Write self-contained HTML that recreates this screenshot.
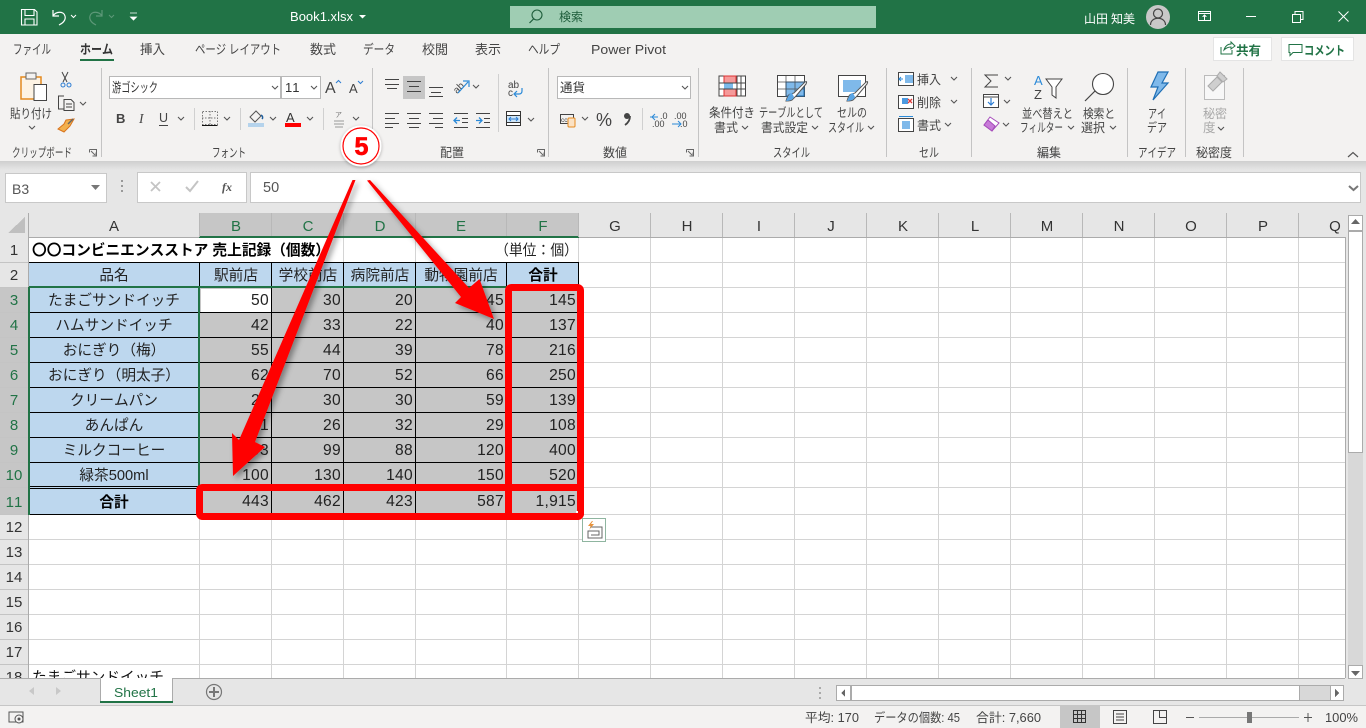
<!DOCTYPE html>
<html lang="ja"><head><meta charset="utf-8"><title>Book1.xlsx - Excel</title>
<style>
html,body{margin:0;padding:0;width:1366px;height:728px;overflow:hidden;background:#fff}
svg{display:block;position:absolute;left:0;top:0}
text{font-family:"Liberation Sans","Noto Sans CJK JP",sans-serif;white-space:pre;text-spacing-trim:space-all;font-kerning:none}
.r{font-size:12.5px;fill:#444}
.t{font-size:13px;fill:#444}
.c{font-size:14.67px;fill:#222;text-anchor:middle}
.n{font-size:15.6px;fill:#222;text-anchor:end;letter-spacing:.3px}
.h{font-size:15px;fill:#333;text-anchor:middle}
.l{stroke:#d4d4d4;stroke-width:1}
.k{stroke:#000;stroke-width:1}
.i{fill:none;stroke:#444;stroke-width:1}
.d{fill:none;stroke:#555;stroke-width:1.1}
</style></head><body>
<svg width="1366" height="728" viewBox="0 0 1366 728" xmlns="http://www.w3.org/2000/svg" shape-rendering="crispEdges">
<defs>
<filter id="sh" x="-30%" y="-30%" width="160%" height="160%"><feDropShadow dx="3" dy="3" stdDeviation="3" flood-color="#000" flood-opacity=".38"/></filter>
<filter id="gl" x="-30%" y="-30%" width="160%" height="160%"><feDropShadow dx="0" dy="1" stdDeviation="1.5" flood-color="#000" flood-opacity=".3"/></filter>
<linearGradient id="rs" x1="0" y1="0" x2="0" y2="1"><stop offset="0" stop-color="#cfcfcf"/><stop offset="1" stop-color="#e6e6e6"/></linearGradient>
</defs>

<!-- page bg -->
<rect width="1366" height="728" fill="#e6e6e6"/>

<!-- GRID -->
<rect x="29" y="238" width="1316" height="440" fill="#fff"/>
<g class="l">
<path d="M29 262.500H1345M29 287.500H1345M29 312.500H1345M29 337.500H1345M29 362.500H1345M29 387.500H1345M29 412.500H1345M29 437.500H1345M29 462.500H1345M29 487.500H1345M29 514.500H1345M29 539.500H1345M29 564.500H1345M29 589.500H1345M29 614.500H1345M29 639.500H1345M29 664.500H1345"/>
<path d="M343.500 238V678M415.500 238V678M578.500 238V678M650.500 238V678M722.500 238V678M794.500 238V678M866.500 238V678M938.500 238V678M1010.500 238V678M1082.500 238V678M1154.500 238V678M1226.500 238V678M1298.500 238V678"/>
<path d="M199.500 263V678M271.500 263V678M506.500 263V678"/>
</g>

<!-- fills -->
<rect x="29" y="263" width="170" height="251" fill="#bdd7ee"/>
<rect x="200" y="263" width="378" height="24" fill="#bdd7ee"/>
<rect x="200" y="288" width="378" height="226" fill="#c6c6c6"/>
<rect x="201" y="289" width="70" height="23" fill="#fff"/>

<!-- black borders -->
<g class="k">
<path d="M29 262.500H579M29 287.500H579M29 312.500H579M29 337.500H579M29 362.500H579M29 387.500H579M29 412.500H579M29 437.500H579M29 462.500H579M29 486.500H579M29 488.500H579M29 514.500H579"/>
<path d="M199.500 263V515M271.500 263V515M343.500 263V515M415.500 263V515M506.500 263V515M578.500 263V515"/>
</g>
<!-- selection green -->
<rect x="28" y="286" width="550" height="2" fill="#217346"/>
<rect x="28" y="287" width="2" height="228" fill="#217346"/>
<rect x="198" y="287" width="2" height="201" fill="#217346"/>

<!-- headers -->
<rect x="0" y="213" width="1345" height="24" fill="#e6e6e6"/>
<rect x="199" y="213" width="380" height="23" fill="#c6c6c6"/>
<rect x="199" y="236" width="380" height="2" fill="#217346"/>
<rect x="579" y="237" width="766" height="1" fill="#ababab"/>
<rect x="28" y="237" width="171" height="1" fill="#ababab"/>
<rect x="0" y="238" width="28" height="440" fill="#e6e6e6"/>
<rect x="0" y="288" width="28" height="227" fill="#c6c6c6"/>
<rect x="28" y="213" width="1" height="25" fill="#ababab"/>
<rect x="28" y="238" width="1" height="49" fill="#ababab"/>
<rect x="28" y="515" width="1" height="163" fill="#ababab"/>
<path d="M199.500 213V237M271.500 213V236M343.500 213V236M415.500 213V236M506.500 213V236M578.500 213V237M650.500 213V237M722.500 213V237M794.500 213V237M866.500 213V237M938.500 213V237M1010.500 213V237M1082.500 213V237M1154.500 213V237M1226.500 213V237M1298.500 213V237" stroke="#b8b8b8" stroke-width="1"/>
<path d="M0 262.500H28M0 287.500H28M0 312.500H28M0 337.500H28M0 362.500H28M0 387.500H28M0 412.500H28M0 437.500H28M0 462.500H28M0 487.500H28M0 514.500H28M0 539.500H28M0 564.500H28M0 589.500H28M0 614.500H28M0 639.500H28M0 664.500H28" stroke="#c4c4c4" stroke-width="1"/>
<path d="M8 233L25 233L25 217Z" fill="#bfbfbf"/>

<g shape-rendering="auto">
<g class="h">
<text x="114" y="231">A</text>
<text x="236" y="231" style="fill:#217346">B</text>
<text x="308" y="231" style="fill:#217346">C</text>
<text x="380" y="231" style="fill:#217346">D</text>
<text x="461" y="231" style="fill:#217346">E</text>
<text x="543" y="231" style="fill:#217346">F</text>
<text x="615" y="231">G</text><text x="687" y="231">H</text><text x="759" y="231">I</text><text x="831" y="231">J</text><text x="903" y="231">K</text><text x="975" y="231">L</text><text x="1047" y="231">M</text><text x="1119" y="231">N</text><text x="1191" y="231">O</text><text x="1263" y="231">P</text><text x="1335" y="231">Q</text>
<text x="14" y="255">1</text><text x="14" y="280">2</text>
<text x="14" y="305" style="fill:#217346">3</text><text x="14" y="330" style="fill:#217346">4</text><text x="14" y="355" style="fill:#217346">5</text><text x="14" y="380" style="fill:#217346">6</text><text x="14" y="405" style="fill:#217346">7</text><text x="14" y="430" style="fill:#217346">8</text><text x="14" y="455" style="fill:#217346">9</text><text x="14" y="480" style="fill:#217346">10</text><text x="14" y="507" style="fill:#217346">11</text>
<text x="14" y="532">12</text><text x="14" y="557">13</text><text x="14" y="582">14</text><text x="14" y="607">15</text><text x="14" y="632">16</text><text x="14" y="657">17</text><text x="14" y="682">18</text>
</g>

<!-- cell text -->
<text x="32" y="255" font-size="14.67" font-weight="700" fill="#000" textLength="298" lengthAdjust="spacingAndGlyphs">〇〇コンビニエンスストア 売上記録（個数）</text>
<text x="495" y="255" font-size="14.67" fill="#222" textLength="83" lengthAdjust="spacingAndGlyphs">（単位：個）</text>
<text class="c" x="114" y="280">品名</text>
<text class="c" x="236" y="280">駅前店</text>
<text class="c" x="308" y="280">学校前店</text>
<text class="c" x="380" y="280">病院前店</text>
<text class="c" x="461" y="280">動物園前店</text>
<text class="c" x="543" y="280" font-weight="700" style="fill:#000">合計</text>
<text class="c" x="114" y="305">たまごサンドイッチ</text>
<text class="c" x="114" y="330">ハムサンドイッチ</text>
<text class="c" x="114" y="355">おにぎり（梅）</text>
<text class="c" x="114" y="380">おにぎり（明太子）</text>
<text class="c" x="114" y="405">クリームパン</text>
<text class="c" x="114" y="430">あんぱん</text>
<text class="c" x="114" y="455">ミルクコーヒー</text>
<text class="c" x="114" y="480">緑茶500ml</text>
<text class="c" x="114" y="507" font-weight="700" style="fill:#000">合計</text>
<g class="n">
<text x="269" y="305">50</text><text x="341" y="305">30</text><text x="413" y="305">20</text><text x="504" y="305">45</text><text x="576" y="305">145</text>
<text x="269" y="330">42</text><text x="341" y="330">33</text><text x="413" y="330">22</text><text x="504" y="330">40</text><text x="576" y="330">137</text>
<text x="269" y="355">55</text><text x="341" y="355">44</text><text x="413" y="355">39</text><text x="504" y="355">78</text><text x="576" y="355">216</text>
<text x="269" y="380">62</text><text x="341" y="380">70</text><text x="413" y="380">52</text><text x="504" y="380">66</text><text x="576" y="380">250</text>
<text x="269" y="405">20</text><text x="341" y="405">30</text><text x="413" y="405">30</text><text x="504" y="405">59</text><text x="576" y="405">139</text>
<text x="269" y="430">21</text><text x="341" y="430">26</text><text x="413" y="430">32</text><text x="504" y="430">29</text><text x="576" y="430">108</text>
<text x="269" y="455">93</text><text x="341" y="455">99</text><text x="413" y="455">88</text><text x="504" y="455">120</text><text x="576" y="455">400</text>
<text x="269" y="480">100</text><text x="341" y="480">130</text><text x="413" y="480">140</text><text x="504" y="480">150</text><text x="576" y="480">520</text>
<text x="269" y="506">443</text><text x="341" y="506">462</text><text x="413" y="506">423</text><text x="504" y="506">587</text><text x="576" y="506">1,915</text>
</g>
<text x="32" y="682" font-size="14.67" fill="#111">たまごサンドイッチ</text>
</g>

<!-- quick analysis -->
<rect x="582.500" y="518.500" width="23" height="23" fill="#fff" stroke="#8fb5a0"/>
<path d="M590 527h12v11h-14v-7h11v4h-8" fill="none" stroke="#666" shape-rendering="auto"/>
<path d="M592 521l-4 5h3l-2 4 5-6h-3l2-3z" fill="#e8923a" shape-rendering="auto"/>

<!-- BOTTOM CHROME -->
<rect x="0" y="678" width="1366" height="28" fill="#e6e6e6"/>
<rect x="0" y="678" width="1345" height="1" fill="#ababab"/>
<rect x="0" y="706" width="1366" height="22" fill="#f3f2f1"/>
<rect x="0" y="705" width="1366" height="1" fill="#c6c6c6"/>
<path d="M34 687v8l-5-4zM56 687v8l5-4z" fill="#c8c8c8" shape-rendering="auto"/>
<rect x="100" y="678" width="73" height="24" fill="#fff"/>
<path d="M100.500 678V702M172.500 678V702" stroke="#ababab"/>
<rect x="100" y="701" width="73" height="2" fill="#217346"/>
<g shape-rendering="auto">
<text x="114" y="697" font-size="13" fill="#217346" textLength="44" lengthAdjust="spacingAndGlyphs">Sheet1</text>
<circle cx="214" cy="692" r="7.500" fill="none" stroke="#777" stroke-width="1.200"/>
<path d="M209 692h10M214 687v10" stroke="#777" stroke-width="2"/>
</g>
<path d="M820 687v2M820 692v2M820 697v2" stroke="#aaa" stroke-width="2"/>
<rect x="836.500" y="685.500" width="507" height="15" fill="#d8d8d8" stroke="#ababab"/>
<rect x="836.500" y="685.500" width="14" height="15" fill="#fff" stroke="#ababab"/>
<rect x="851.500" y="685.500" width="448" height="15" fill="#fff" stroke="#ababab"/>
<rect x="1330.500" y="685.500" width="13" height="15" fill="#fff" stroke="#ababab"/>
<path d="M845 689v8l-4-4zM1335 689v8l4-4z" fill="#666"/>

<!-- status -->
<rect x="1060" y="706" width="40" height="22" fill="#c6c6c6"/>
<g shape-rendering="auto">
<rect x="9" y="712" width="14" height="10" fill="none" stroke="#555"/><circle cx="19" cy="719" r="4" fill="#f3f2f1" stroke="#555"/><circle cx="19" cy="719" r="1.500" fill="#555"/>
<text class="r" x="805" y="722" textLength="54" lengthAdjust="spacingAndGlyphs">平均: 170</text>
<text class="r" x="874" y="722" textLength="86" lengthAdjust="spacingAndGlyphs">データの個数: 45</text>
<text class="r" x="976" y="722" textLength="65" lengthAdjust="spacingAndGlyphs">合計: 7,660</text>
<text class="r" x="1325" y="722" textLength="33" lengthAdjust="spacingAndGlyphs">100%</text>
</g>
<path d="M1073.500 710.500h12v12h-12zM1077.500 710.500v12M1081.500 710.500v12M1073.500 714.500h12M1073.500 718.500h12" fill="none" stroke="#333"/>
<path d="M1113.500 710.500h13v13h-13zM1116 714h8M1116 717h8M1116 720h8" fill="none" stroke="#444"/>
<path d="M1153.500 710.500h13v13h-13zM1159.500 710.500v7h7" fill="none" stroke="#444"/>
<path d="M1186 717.500h8M1304 717.500h8M1308 713v9" stroke="#555"/>
<rect x="1199" y="717" width="100" height="1" fill="#aaa"/>
<rect x="1247" y="712" width="5" height="11" fill="#777"/>

<!-- v scrollbar -->
<rect x="1345" y="213" width="21" height="465" fill="#e6e6e6"/>
<rect x="1345" y="237" width="1" height="441" fill="#ababab"/>
<rect x="1348" y="215" width="15" height="463" fill="#d8d8d8"/>
<rect x="1348.500" y="215.500" width="14" height="15" fill="#fff" stroke="#ababab"/>
<rect x="1348.500" y="231.500" width="14" height="221" fill="#fff" stroke="#ababab"/>
<rect x="1348.500" y="665.500" width="14" height="13" fill="#fff" stroke="#ababab"/>
<path d="M1351 224h9l-4.500-5zM1351 671h9l-4.500 5z" fill="#666" shape-rendering="auto"/>

<!-- FORMULA BAR -->
<rect x="5.500" y="173.500" width="101" height="29" fill="#fff" stroke="#c8c8c8"/>
<rect x="137.500" y="172.500" width="109" height="30" fill="#fff" stroke="#c8c8c8"/>
<rect x="250.500" y="172.500" width="1110" height="30" fill="#fff" stroke="#c8c8c8"/>
<path d="M122 180v2M122 185v2M122 190v2" stroke="#999" stroke-width="2"/>
<g shape-rendering="auto">
<text x="12" y="194" font-size="14" fill="#555">B3</text>
<path d="M91 185h9l-4.500 5z" fill="#777"/>
<path d="M151 182l9 9M160 182l-9 9" stroke="#c4c4c4" stroke-width="1.800"/>
<path d="M186 187l4 4 8-10" stroke="#c4c4c4" stroke-width="2" fill="none"/>
<text x="222" y="191" font-size="12" font-style="italic" font-weight="700" style="font-family:'Liberation Serif',serif" fill="#555">fx</text>
<text x="263" y="192" font-size="14.500" fill="#555">50</text>
<path d="M1349 186l4.500 4 4.500-4" fill="none" stroke="#777" stroke-width="2"/>
</g>

<!-- RIBBON -->
<rect x="0" y="34" width="1366" height="127" fill="#f3f2f1"/>
<rect x="0" y="161" width="1366" height="9" fill="url(#rs)"/>
<path d="M101.500 68V157M372.500 68V157M548.500 68V157M698.500 68V157M886.500 68V157M971.500 68V157M1127.500 68V157M1185.500 68V157M1243.500 68V157" stroke="#c4c4c4"/>
<path d="M194.500 108V130M240.500 108V130M323.500 108V130M498.500 74V132M642.500 108V130" stroke="#d0d0d0"/>

<!-- title bar -->
<rect x="0" y="0" width="1366" height="34" fill="#217346"/>
<rect x="510" y="6" width="366" height="22" fill="#9fcdb3"/>
<g shape-rendering="auto">
<path d="M21.500 9.500h13l2.500 2.500v13h-15.500zM25 9.500v6h9v-6M25 25v-6h9v6" fill="none" stroke="#fff" stroke-width="1.100"/>
<path d="M53 10v6h6M53 16c3-5 11-5 12 0c1 4-2 7-6 9" fill="none" stroke="#fff" stroke-width="1.200"/>
<path d="M71 15l2.500 2.500 2.500-2.500" fill="none" stroke="#fff"/>
<path d="M102 10v6h-6M102 16c-3-5-11-5-12 0c-1 4 2 7 6 9" fill="none" stroke="#5d9878" stroke-width="1.200"/>
<path d="M109 15l2.500 2.500 2.500-2.500" fill="none" stroke="#5d9878"/>
<path d="M130 13h7M130.500 17h6l-3 3z" fill="#fff" stroke="#fff" stroke-width=".8"/>
<text x="290" y="21" font-size="12.500" fill="#fff" textLength="63" lengthAdjust="spacingAndGlyphs">Book1.xlsx</text>
<path d="M359 15h7l-3.500 3.500z" fill="#fff"/>
<circle cx="537" cy="15" r="5" fill="none" stroke="#1d5c3a" stroke-width="1.100"/><path d="M533.500 19l-4 4" stroke="#1d5c3a" stroke-width="1.200"/>
<text x="559" y="21" font-size="12" fill="#1d5c3a">検索</text>
<text x="1084" y="23" font-size="12" fill="#fff">山田</text>
<text x="1111" y="23" font-size="12" fill="#fff">知美</text>
<circle cx="1158" cy="17" r="12" fill="#c8c8c8"/>
<circle cx="1158" cy="13.500" r="4.500" fill="none" stroke="#444" stroke-width="1.200"/><path d="M1150.500 25c0-9 15-9 15 0" fill="none" stroke="#444" stroke-width="1.200"/>
</g>
<path d="M1198.500 11.500h12v9h-12zM1198.500 13.500h12M1204.500 20v-5M1202.500 17l2-2 2 2" fill="none" stroke="#fff"/>
<rect x="1246" y="16" width="10" height="1" fill="#fff"/>
<path d="M1292.500 14.500h8v8h-8zM1295 14v-2.500h8v8h-2.500" fill="none" stroke="#fff"/>
<path d="M1338.500 11.500l10 10M1348.500 11.500l-10 10" stroke="#fff" shape-rendering="auto"/>

<!-- tabs -->
<g shape-rendering="auto">
<text class="t" x="13" y="54" textLength="38" lengthAdjust="spacingAndGlyphs">ファイル</text>
<text class="t" x="80" y="54" textLength="33" lengthAdjust="spacingAndGlyphs" font-weight="700" style="fill:#333">ホーム</text>
<text class="t" x="140" y="54" textLength="25" lengthAdjust="spacingAndGlyphs">挿入</text>
<text class="t" x="195" y="54" textLength="86" lengthAdjust="spacingAndGlyphs">ページ レイアウト</text>
<text class="t" x="310" y="54" textLength="26" lengthAdjust="spacingAndGlyphs">数式</text>
<text class="t" x="363" y="54" textLength="32" lengthAdjust="spacingAndGlyphs">データ</text>
<text class="t" x="422" y="54" textLength="26" lengthAdjust="spacingAndGlyphs">校閲</text>
<text class="t" x="475" y="54" textLength="26" lengthAdjust="spacingAndGlyphs">表示</text>
<text class="t" x="528" y="54" textLength="32" lengthAdjust="spacingAndGlyphs">ヘルプ</text>
<text class="t" x="591" y="54" textLength="75" lengthAdjust="spacingAndGlyphs">Power Pivot</text>
</g>
<rect x="80" y="59" width="34" height="2" fill="#217346"/>

<!-- share/comment -->
<rect x="1213.500" y="37.500" width="58" height="23" fill="#fff" stroke="#e4e4e4"/>
<rect x="1281.500" y="37.500" width="72" height="23" fill="#fff" stroke="#e4e4e4"/>
<g shape-rendering="auto">
<path d="M1221 47v7h11v-4M1224 50c1-4 4-6 7-6v-2l4 4-4 3v-2c-3 0-5 1-7 3z" fill="none" stroke="#217346"/>
<text x="1236" y="55" font-size="12.500" font-weight="700" fill="#217346">共有</text>
<path d="M1289 44.500h13v8h-9l-3 3v-3h-1z" fill="none" stroke="#217346"/>
<text x="1304" y="55" font-size="12.500" font-weight="700" fill="#217346" textLength="41" lengthAdjust="spacingAndGlyphs">コメント</text>

<!-- Clipboard -->
<path d="M21 77h20v22H21z" fill="#fdf3e4" stroke="#e48a1f" stroke-width="1.500"/>
<rect x="26" y="73" width="10" height="6" fill="#f3f2f1" stroke="#666"/>
<rect x="34" y="84.500" width="12.500" height="16" fill="#fff" stroke="#444"/>
<text class="r" x="10" y="118" textLength="42" lengthAdjust="spacingAndGlyphs">貼り付け</text>
<path d="M29 126l3 3 3-3" class="d"/>
<path d="M62 72l5 10M68 72l-5 10" stroke="#444" fill="none"/><circle cx="63" cy="85" r="2" fill="none" stroke="#2b7cd3"/><circle cx="69" cy="85" r="2" fill="none" stroke="#2b7cd3"/>
<path d="M64 96h-5.500v13h5M64 99.500h7l3 3v8h-10zM66 104h6M66 107h6" class="i"/>
<path d="M80 102l3 3 3-3" class="d"/>
<path d="M66 120l8-1-4 7-6 6-6-3 6-5z" fill="#f2b04e" stroke="#d9741c"/><path d="M68 124l5-5" stroke="#666" stroke-width="1.500"/>
<text class="r" x="12" y="157" textLength="60" lengthAdjust="spacingAndGlyphs">クリップボード</text>
<path d="M89.500 149.500h7v7M89.500 149.500v3M91 151l4 4M92.500 156h3.500v-3.500" fill="none" stroke="#666"/>

<!-- Font -->
<rect x="109.500" y="76.500" width="171" height="22" fill="#fff" stroke="#b8b8b8"/>
<rect x="281.500" y="76.500" width="39" height="22" fill="#fff" stroke="#b8b8b8"/>
<text x="112" y="92" font-size="13" fill="#333" textLength="46" lengthAdjust="spacingAndGlyphs">游ゴシック</text>
<text x="285" y="92" font-size="13" fill="#333">11</text>
<path d="M272 86l3 3 3-3M311 86l3 3 3-3" class="d"/>
<text x="325" y="93" font-size="16" fill="#444">A</text><path d="M336 83l2.500-2.500 2.500 2.500" fill="none" stroke="#2b7cd3"/>
<text x="349" y="93" font-size="13" fill="#444">A</text><path d="M358 81l2.500 2.500 2.500-2.500" fill="none" stroke="#2b7cd3"/>
<text x="116" y="123" font-size="13" font-weight="700" fill="#444">B</text>
<text x="139" y="123" font-size="13.500" font-style="italic" fill="#444" style="font-family:'Liberation Serif',serif">I</text>
<text x="159" y="122" font-size="12.500" fill="#444">U</text><path d="M159 125.500h9" stroke="#444"/>
<path d="M178 117l3 3 3-3M224 117l3 3 3-3M270 117l3 3 3-3M307 117l3 3 3-3M353 117l3 3 3-3" class="d"/>
<path d="M202.500 111.500h15v13h-15zM210 111v14M202 118h16" fill="none" stroke="#777" stroke-dasharray="1.500 1.500"/><path d="M202 125.500h15.500" stroke="#111"/>
<path d="M256 111l-6 6 5 5 6-6z" fill="none" stroke="#555"/><path d="M261 115c2 1 2 3 1 4" fill="none" stroke="#1f5f9e" stroke-width="1.500"/>
<rect x="248" y="123" width="16" height="4" fill="#b5d3ec"/>
<text x="286" y="122" font-size="13" fill="#333">A</text><rect x="285" y="123" width="16" height="4" fill="#f00"/>
<text x="335" y="117" font-size="7" fill="#777">ア</text><path d="M334 121h10M334 124h10M335 127h8" stroke="#999"/>
<text class="r" x="212" y="157" textLength="34" lengthAdjust="spacingAndGlyphs">フォント</text>

<!-- Alignment -->
<rect x="403" y="76" width="22" height="23" fill="#c6c6c6"/>
<g stroke="#444" fill="none" shape-rendering="crispEdges">
<path d="M385 79.500h14M385 84.500h14M387 88.500h10"/>
<path d="M407 81.500h14M409 86.500h10M407 91.500h14"/>
<path d="M429 87.500h14M431 92.500h10M429 96.500h14"/>
<path d="M385 113.500h14M385 118.500h10M385 123.500h14M385 127.500h8"/>
<path d="M407 113.500h14M409 118.500h10M407 123.500h14M409 127.500h10"/>
<path d="M429 113.500h14M433 118.500h10M429 123.500h14M435 127.500h8"/>
<path d="M454 113.500h14M462 118.500h6M462 122.500h6M454 127.500h14"/>
<path d="M476 113.500h14M484 118.500h6M484 122.500h6M476 127.500h14"/>
</g>
<path d="M460 120.500h-6m3-3l-3 3 3 3" fill="none" stroke="#2b8ad8" stroke-width="1.300"/>
<path d="M476 120.500h6m-3-3l3 3-3 3" fill="none" stroke="#2b8ad8" stroke-width="1.300"/>
<text x="452" y="92" font-size="10" fill="#444" transform="rotate(-45 457 87)">ab</text>
<path d="M458 93l10-11M463 81h6v6" fill="none" stroke="#2b8ad8" stroke-width="1.200"/>
<path d="M473 85l3 3 3-3M528 118l3 3 3-3" class="d"/>
<text x="508" y="88" font-size="10" fill="#444">ab</text><text x="508" y="96" font-size="10" fill="#444">c</text>
<path d="M522 88v3c0 2-1 3-3 3h-4m2-3l-3 3 3 3" fill="none" stroke="#2b8ad8" stroke-width="1.200"/>
<rect x="506.500" y="111.500" width="14" height="14" fill="#fff" stroke="#333"/><path d="M506 115.500h15M506 122.500h15" stroke="#333"/><rect x="507" y="116" width="13" height="6" fill="#cfe6f8"/>
<path d="M509 119h9M511 117l-2 2 2 2M516 117l2 2-2 2" fill="none" stroke="#2b7cd3"/>
<text class="r" x="440" y="157" textLength="24" lengthAdjust="spacingAndGlyphs">配置</text>
<path d="M537.500 149.500h7v7M537.500 149.500v3M539 151l4 4M540.500 156h3.500v-3.500" fill="none" stroke="#666"/>

<!-- Number -->
<rect x="557.500" y="76.500" width="133" height="22" fill="#fff" stroke="#b8b8b8"/>
<text x="560" y="92" font-size="12.500" fill="#333">通貨</text>
<path d="M682 86l3 3 3-3M582 117l3 3 3-3" class="d"/>
<rect x="560.500" y="114.500" width="13" height="9" fill="none" stroke="#444"/><text x="561" y="122" font-size="6.500" fill="#444">cc</text>
<rect x="568" y="118" width="7" height="9" rx="1" fill="#fbe2c4" stroke="#e48a1f"/>
<text x="596" y="126" font-size="18" fill="#444">%</text>
<circle cx="627" cy="116" r="3" fill="#444"/><path d="M630 116c0 4-2 7-5 9" fill="none" stroke="#444" stroke-width="1.800"/>
<text x="660" y="119" font-size="9" fill="#444">.0</text><text x="652" y="127" font-size="9" fill="#444">.00</text>
<path d="M650 117h8m-3-3l-3 3 3 3" fill="none" stroke="#2b8ad8"/>
<text x="674" y="119" font-size="9" fill="#444">.00</text><text x="680" y="127" font-size="9" fill="#444">.0</text>
<path d="M672 124h9m-3-3l3 3-3 3" fill="none" stroke="#2b8ad8"/>
<text class="r" x="603" y="157" textLength="24" lengthAdjust="spacingAndGlyphs">数値</text>
<path d="M686.500 149.500h7v7M686.500 149.500v3M688 151l4 4M689.500 156h3.500v-3.500" fill="none" stroke="#666"/>

<!-- Styles -->
<rect x="719" y="76" width="26.500" height="20" fill="#fff" stroke="#444"/>
<rect x="724" y="76" width="12" height="7" fill="#f59a9a" stroke="#d33"/>
<rect x="724" y="83" width="9" height="6" fill="#7cb9ea"/>
<rect x="724" y="89" width="12" height="7" fill="#f59a9a" stroke="#d33"/>
<path d="M737 76v20M741 76v20M719 83h27M719 89h27" stroke="#444" fill="none"/>
<rect x="777.500" y="75.500" width="27" height="21" fill="#fff" stroke="#444"/>
<rect x="786" y="82" width="18" height="14" fill="#7fb9ea" stroke="#1f6fb5"/>
<path d="M777 82h27M777 89h27M786 75v21M795 75v21" stroke="#444" opacity=".7"/>
<path d="M806 84l-10 12-3 3c-1 2-5 2-7 2 1-3 2-7 5-7l3-1 11-11c2-1 2 0 1 2z" fill="#fff" stroke="#555"/>
<path d="M792 93c-3 0-4 4-6 8 3 0 7-1 8-4z" fill="#5aa5e5"/>
<rect x="838.500" y="75.500" width="27" height="21" fill="#fff" stroke="#444"/>
<rect x="843" y="80" width="18" height="12" fill="#7fb9ea"/>
<path d="M867 84l-10 12-3 3c-1 2-5 2-7 2 1-3 2-7 5-7l3-1 11-11c2-1 2 0 1 2z" fill="#fff" stroke="#555"/>
<path d="M853 93c-3 0-4 4-6 8 3 0 7-1 8-4z" fill="#5aa5e5"/>
<text class="r" x="709" y="117" textLength="46" lengthAdjust="spacingAndGlyphs">条件付き</text>
<text class="r" x="714" y="132" textLength="24" lengthAdjust="spacingAndGlyphs">書式</text>
<path d="M742 126l3 3 3-3M812 126l3 3 3-3M868 126l3 3 3-3M945 123l3 3 3-3M1068 126l3 3 3-3M1110 126l3 3 3-3M1218 127l3 3 3-3" class="d"/>
<text class="r" x="759" y="117" textLength="64" lengthAdjust="spacingAndGlyphs">テーブルとして</text>
<text class="r" x="761" y="132" textLength="47" lengthAdjust="spacingAndGlyphs">書式設定</text>
<text class="r" x="837" y="117" textLength="30" lengthAdjust="spacingAndGlyphs">セルの</text>
<text class="r" x="828" y="132" textLength="36" lengthAdjust="spacingAndGlyphs">スタイル</text>
<text class="r" x="773" y="157" textLength="37" lengthAdjust="spacingAndGlyphs">スタイル</text>

<!-- Cells -->
<rect x="898.500" y="72.500" width="15" height="13" fill="#fff" stroke="#444"/><rect x="905" y="75" width="8" height="8" fill="#7fb9ea"/><path d="M899 79h4m-2-2l-2 2 2 2" stroke="#2b8ad8" fill="none"/>
<rect x="898.500" y="95.500" width="15" height="13" fill="#fff" stroke="#444"/><rect x="902" y="98" width="6" height="6" fill="#4c9ae0"/><path d="M908 99l4 4M912 99l-4 4" stroke="#e03c3c" stroke-width="1.300"/>
<rect x="898.500" y="118.500" width="15" height="13" fill="#fff" stroke="#444"/><rect x="902" y="121" width="8" height="8" fill="#7fb9ea"/><path d="M899 116.500h14" stroke="#2b8ad8"/>
<text class="r" x="917" y="84" textLength="24" lengthAdjust="spacingAndGlyphs">挿入</text>
<text class="r" x="917" y="107" textLength="24" lengthAdjust="spacingAndGlyphs">削除</text>
<text class="r" x="917" y="130" textLength="24" lengthAdjust="spacingAndGlyphs">書式</text>
<path d="M951 77l3 3 3-3M951 100l3 3 3-3" class="d"/>
<text class="r" x="919" y="157" textLength="20" lengthAdjust="spacingAndGlyphs">セル</text>

<!-- Editing -->
<path d="M998 75h-13l6 6-6 6h13" class="i"/>
<path d="M1005 77l3 3 3-3M1004 100l3 3 3-3M1003 123l3 3 3-3" class="d"/>
<rect x="983.500" y="94.500" width="15" height="13" fill="#fff" stroke="#444"/><path d="M983 97h16" stroke="#444"/><path d="M991 98v7m-3-3l3 3 3-3" fill="none" stroke="#2b7cd3" stroke-width="1.200"/>
<path d="M990 117l9 6-7 8-8-6z" fill="#fff" stroke="#a64dbb"/><path d="M984 125l4-5 7 6-3 5z" fill="#c77ad8" stroke="#a64dbb"/>
<text x="1034" y="85" font-size="13" fill="#2b8ad8">A</text>
<text x="1034" y="99" font-size="13" fill="#444">Z</text>
<path d="M1046 79h16l-6 8v11l-4-3v-8z" fill="#fff" stroke="#444"/>
<text class="r" x="1022" y="118" textLength="51" lengthAdjust="spacingAndGlyphs">並べ替えと</text>
<text class="r" x="1020" y="132" textLength="43" lengthAdjust="spacingAndGlyphs">フィルター</text>
<circle cx="1103" cy="84" r="10.500" fill="#fff" stroke="#444" stroke-width="1.100"/><path d="M1095 91l-10 10" stroke="#444" stroke-width="1.200"/>
<text class="r" x="1083" y="118" textLength="32" lengthAdjust="spacingAndGlyphs">検索と</text>
<text class="r" x="1081" y="132" textLength="24" lengthAdjust="spacingAndGlyphs">選択</text>
<text class="r" x="1037" y="157" textLength="24" lengthAdjust="spacingAndGlyphs">編集</text>

<!-- Ideas -->
<path d="M1158 72h10l-6 11h6l-15 17 5-13h-7z" fill="#7fb9ea" stroke="#1f6fb5" stroke-width="1.200"/>
<text class="r" x="1148" y="118" textLength="18" lengthAdjust="spacingAndGlyphs">アイ</text>
<text class="r" x="1147" y="132" textLength="20" lengthAdjust="spacingAndGlyphs">デア</text>
<text class="r" x="1138" y="157" textLength="38" lengthAdjust="spacingAndGlyphs">アイデア</text>

<!-- Sensitivity -->
<rect x="1204.500" y="75.500" width="20" height="24" fill="#f7f7f7" stroke="#bbb"/>
<path d="M1208 86l9-9 5 5-9 9z" fill="#cfcfcf" stroke="#aaa"/><path d="M1220 72l7 7-4 3-6-6z" fill="#cfcfcf" stroke="#aaa"/>
<text class="r" x="1203" y="118" textLength="24" lengthAdjust="spacingAndGlyphs" style="fill:#a8a8a8">秘密</text>
<text class="r" x="1203" y="132" style="fill:#a8a8a8">度</text>
<text class="r" x="1196" y="157" textLength="36" lengthAdjust="spacingAndGlyphs">秘密度</text>
<path d="M1348 157l5-4.500 5 4.500" fill="none" stroke="#555" stroke-width="1.200"/>
</g>

<!-- RED annotation -->
<g shape-rendering="auto">
<rect x="199.500" y="487.500" width="381" height="29" rx="3" fill="none" stroke="#f00" stroke-width="7"/>
<rect x="508.500" y="287.500" width="72" height="229" rx="3" fill="none" stroke="#f00" stroke-width="7"/>
<rect x="576" y="511" width="2" height="2" fill="#fff"/>
<g filter="url(#sh)">
<path d="M352.500 180L355.500 180L255 442L265 447L233 476L232 433L239 440Z" fill="#f00"/>
<path d="M367 180.500L370 180L469 288L479.500 279L494 319L455 303L461 297Z" fill="#f00"/>
</g>
<g filter="url(#gl)"><circle cx="361" cy="146" r="20.500" fill="#fff"/></g>
<circle cx="361" cy="146" r="18" fill="none" stroke="#f00" stroke-width="1.200"/>
<text x="361.500" y="155" font-size="25" font-weight="700" fill="#f00" stroke="#f00" stroke-width=".7" text-anchor="middle">5</text>
</g>
</svg>
</body></html>
